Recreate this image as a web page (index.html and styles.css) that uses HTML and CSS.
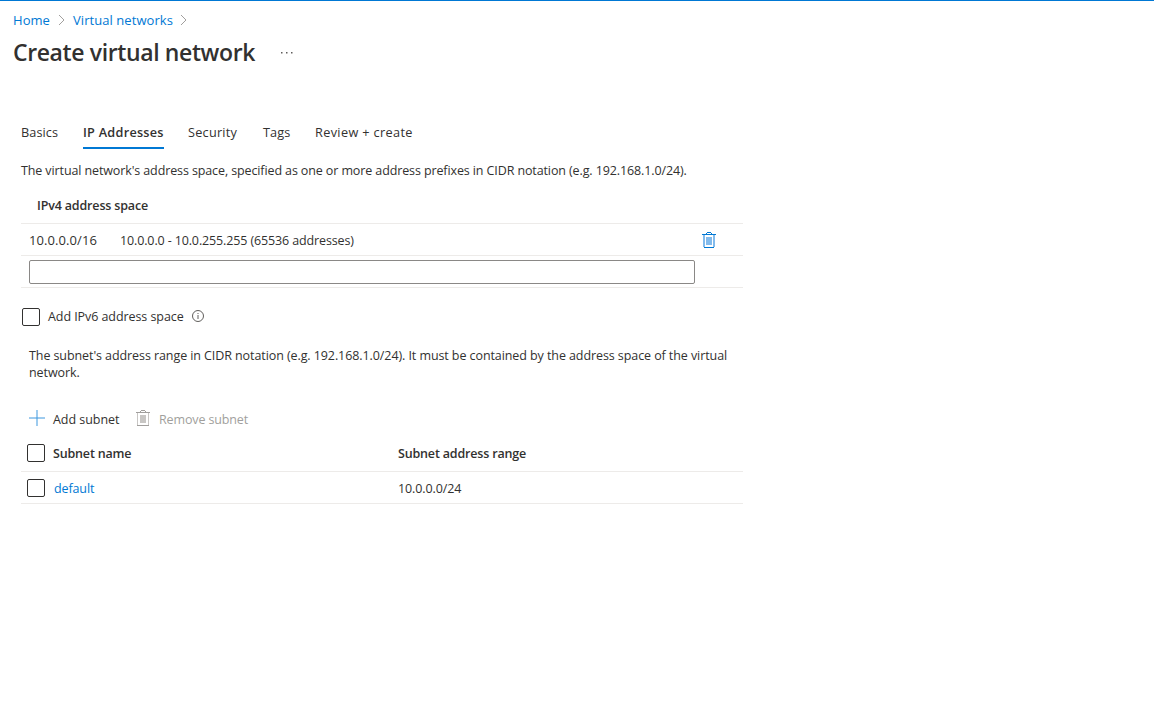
FILE: index.html
```html
<!DOCTYPE html>
<html lang="en">
<head>
<meta charset="utf-8">
<title>Create virtual network</title>
<link rel="stylesheet" href="styles.css">
</head>
<body>
<header class="header">
  <nav class="breadcrumb">
    <a class="crumb crumb-home" href="#">Home</a>
    <svg class="chevron" viewBox="0 0 8 12"><path d="M1 1l5 5-5 5"/></svg>
    <a class="crumb crumb-networks" href="#">Virtual networks</a>
    <svg class="chevron" viewBox="0 0 8 12"><path d="M1 1l5 5-5 5"/></svg>
  </nav>
  <div class="title-row">
    <h1 class="title">Create virtual network</h1>
    <svg class="more" viewBox="0 0 12 2"><path d="M0 0h1.500v1.500H0zM5 0h1.500v1.500H5zM10 0h1.500v1.500h-1.500z"/></svg>
  </div>
</header>
<main class="content">
  <nav class="tabs">
    <a class="tab tab-basics">Basics</a>
    <a class="tab tab-ip active">IP Addresses</a>
    <a class="tab tab-security">Security</a>
    <a class="tab tab-tags">Tags</a>
    <a class="tab tab-review">Review + create</a>
  </nav>
  <p class="intro">The virtual network's address space, specified as one or more address prefixes in CIDR notation (e.g. 192.168.1.0/24).</p>
  <section class="space">
    <h2 class="space-title">IPv4 address space</h2>
    <div class="space-row">
      <span class="cidr">10.0.0.0/16</span>
      <span class="range">10.0.0.0 - 10.0.255.255 (65536 addresses)</span>
      <svg class="trash" viewBox="0 0 14 16"><path class="fill" d="M1 3h2v12H1zM11 3h2v12h-2zM4 5h6v8H4z"/><path class="line" d="M0 2h14v1H0zM4 1h1v1H4zM9 1h1v1H9zM5 0h4v1H5zM2 15h10v1H2z"/></svg>
    </div>
    <div class="space-row entry"><input class="address-input" type="text" aria-label="Address space"></div>
  </section>
  <label class="ipv6"><span class="checkbox"></span><span class="ipv6-label">Add IPv6 address space</span>
    <svg class="info" viewBox="0 0 12 12"><circle cx="6" cy="6" r="5.500"/><path d="M6 5v4M6 3v1"/></svg>
  </label>
  <p class="subnet-help">The subnet's address range in CIDR notation (e.g. 192.168.1.0/24). It must be contained by the address space of the virtual<br>network.</p>
  <div class="toolbar">
    <svg class="plus" viewBox="0 0 16 16"><path d="M8 0v16M0 8h16"/></svg>
    <span class="command add">Add subnet</span>
    <svg class="trash disabled" viewBox="0 0 14 16"><path class="fill" d="M1 3h1v12H1zM12 3h1v12h-1zM4 5h6v8H4z"/><path class="line" d="M0 2h14v1H0zM4 1h1v1H4zM9 1h1v1H9zM5 0h4v1H5zM1 15h12v1H1z"/></svg>
    <span class="command remove">Remove subnet</span>
  </div>
  <div class="grid-row grid-head">
    <span class="checkbox"></span>
    <span class="name">Subnet name</span>
    <span class="address">Subnet address range</span>
  </div>
  <div class="grid-row">
    <span class="checkbox"></span>
    <a class="name link">default</a>
    <span class="address">10.0.0.0/24</span>
  </div>
</main>
</body>
</html>
```
FILE: styles.css
```css
* { box-sizing: border-box; }
body { margin: 0; background: #fff; color: #323130; font: 12.5px/18px "Open Sans", "Noto Sans", sans-serif; letter-spacing: -0.113px; }
h1, h2, p { margin: 0; font-weight: 400; }
a { color: inherit; text-decoration: none; }
svg { flex: none; }
.header { height: 117px; border-top: 1px solid #0078d4; padding: 10px 13px 0; }
.breadcrumb { display: flex; align-items: center; height: 18px; font-size: 13px; letter-spacing: 0.06px; white-space: nowrap; }
.crumb { color: #0078d4; padding-bottom: 1px; }
.crumb-home { width: 45px; }
.crumb-networks { width: 101px; margin-left: 7px; }
.chevron { width: 8px; height: 12px; fill: none; stroke: #a19f9d; }
.crumb-networks + .chevron { margin-left: 6px; }
.title-row { display: flex; align-items: center; height: 32px; margin-top: 8px; }
.title { width: 268px; font-size: 23px; font-weight: 600; line-height: 32px; letter-spacing: -0.38px; padding-bottom: 3px; white-space: nowrap; }
.more { width: 12px; height: 2px; fill: #605e5c; }
.content { width: 743px; padding-left: 21px; white-space: nowrap; }
.tabs { display: flex; height: 32px; letter-spacing: 0.08px; font-size: 12.7px; }
.tab { height: 32px; padding-top: 6px; }
.tab-basics { width: 38px; margin-right: 24px; }
.tab-ip { width: 81px; margin-right: 24px; letter-spacing: 0.25px; }
.tab-security { width: 51px; margin-right: 24px; letter-spacing: 0.24px; }
.tab-tags { width: 28px; margin-right: 24px; }
.tab-review { letter-spacing: 0.36px; }
.active { border-bottom: 2px solid #0078d4; font-weight: 600; }
.intro { height: 42px; padding-top: 13px; }
.space-title { height: 32px; padding: 6px 0 0 16px; font-size: 12.5px; font-weight: 600; letter-spacing: -0.16px; }
.space-row { display: flex; align-items: center; height: 32px; padding-left: 8px; border-top: 1px solid #edebe9; }
.cidr { width: 91px; font-size: 13px; letter-spacing: 0.08px; padding-top: 1px; }
.range { width: 582px; padding-top: 2px; letter-spacing: -0.13px; }
.trash { width: 14px; height: 16px; }
.trash .fill { fill: #83bbec; }
.trash .line { fill: #0078d4; }
.entry { height: 33px; border-bottom: 1px solid #edebe9; }
.address-input { width: 666px; height: 24px; border: 1px solid #8a8886; border-radius: 2px; padding: 0 8px; }
.checkbox { flex: none; width: 18px; height: 18px; border: 1px solid #323130; border-radius: 2px; }
.ipv6 { display: flex; align-items: center; margin-top: 19px; padding-left: 1px; height: 20px; letter-spacing: -0.07px; }
.ipv6-label { width: 144px; margin-left: 8px; }
.info { width: 12px; height: 12px; margin-bottom: 2px; fill: none; stroke: #605e5c; }
.subnet-help { height: 61px; margin-top: 20px; padding-left: 8px; line-height: 17px; letter-spacing: -0.083px; }
.toolbar { display: flex; align-items: center; height: 20px; padding-left: 8px; }
.plus { width: 16px; height: 16px; stroke: #3c97de; }
.command { margin-left: 8px; padding-top: 3px; }
.add { width: 83px; letter-spacing: -0.04px; }
.remove { margin-left: 9px; color: #a19f9d; letter-spacing: -0.13px; }
.disabled .fill { fill: #c8c6c4; }
.disabled .line { fill: #a19f9d; }
.grid-row { display: flex; align-items: center; height: 32px; padding-left: 6px; border-bottom: 1px solid #edebe9; }
.grid-head { height: 36px; margin-top: 8px; padding-bottom: 1px; font-weight: 600; letter-spacing: -0.17px; }
.grid-head .name, .grid-head .address { padding-top: 2px; }
.name { width: 345px; margin-left: 8px; }
.address { padding-top: 2px; }
.link { padding: 3px 0 0 1px; color: #0078d4; }
```
